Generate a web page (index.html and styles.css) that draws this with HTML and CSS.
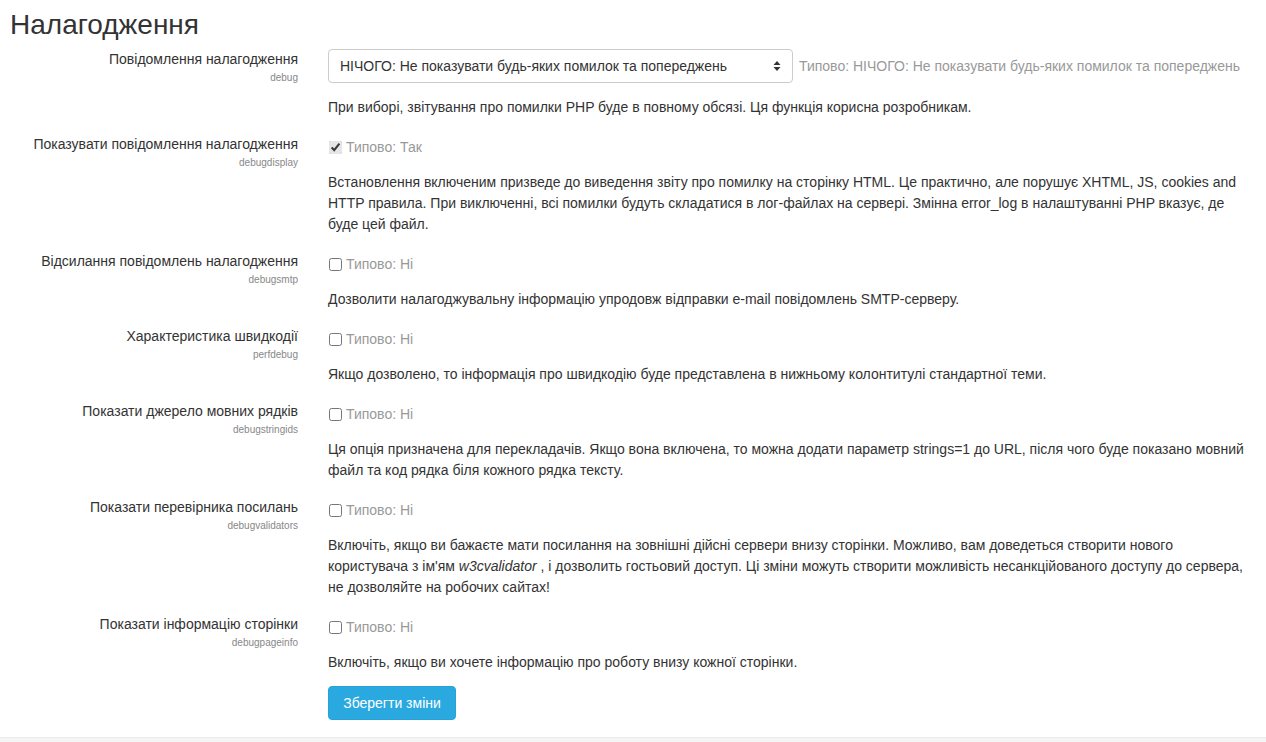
FILE: index.html
```html
<!DOCTYPE html>
<html lang="uk">
<head>
<meta charset="utf-8">
<title>Налагодження</title>
<link rel="stylesheet" href="styles.css">
</head>
<body>
<div class="page">
  <h2 class="title">Налагодження</h2>

  <div class="row">
    <div class="label"><div class="name">Повідомлення налагодження</div><div class="short">debug</div></div>
    <div class="setting">
      <div class="ctl-line">
        <div class="select-wrap">
          <select class="select"><option>НІЧОГО: Не показувати будь-яких помилок та попереджень</option></select>
          <svg class="arrows" width="8" height="12" viewBox="0 0 8 12"><path d="M4 1 L7.5 5 H0.5 Z M4 11 L7.5 7 H0.5 Z" fill="#333"/></svg>
        </div>
        <span class="default sel-default">Типово: НІЧОГО: Не показувати будь-яких помилок та попереджень</span>
      </div>
      <div class="desc">При виборі, звітування про помилки PHP буде в повному обсязі. Ця функція корисна розробникам.</div>
    </div>
  </div>

  <div class="row">
    <div class="label"><div class="name">Показувати повідомлення налагодження</div><div class="short">debugdisplay</div></div>
    <div class="setting">
      <div class="check-line"><input type="checkbox" checked><span class="default">Типово: Так</span></div>
      <div class="desc">Встановлення включеним призведе до виведення звіту про помилку на сторінку HTML. Це практично, але порушує XHTML, JS, cookies and HTTP правила. При виключенні, всі помилки будуть складатися в лог-файлах на сервері. Змінна error_log в налаштуванні PHP вказує, де буде цей файл.</div>
    </div>
  </div>

  <div class="row">
    <div class="label"><div class="name">Відсилання повідомлень налагодження</div><div class="short">debugsmtp</div></div>
    <div class="setting">
      <div class="check-line"><input type="checkbox"><span class="default">Типово: Ні</span></div>
      <div class="desc">Дозволити налагоджувальну інформацію упродовж відправки e-mail повідомлень SMTP-серверу.</div>
    </div>
  </div>

  <div class="row">
    <div class="label"><div class="name">Характеристика швидкодії</div><div class="short">perfdebug</div></div>
    <div class="setting">
      <div class="check-line"><input type="checkbox"><span class="default">Типово: Ні</span></div>
      <div class="desc">Якщо дозволено, то інформація про швидкодію буде представлена в нижньому колонтитулі стандартної теми.</div>
    </div>
  </div>

  <div class="row">
    <div class="label"><div class="name">Показати джерело мовних рядків</div><div class="short">debugstringids</div></div>
    <div class="setting">
      <div class="check-line"><input type="checkbox"><span class="default">Типово: Ні</span></div>
      <div class="desc">Ця опція призначена для перекладачів. Якщо вона включена, то можна додати параметр strings=1 до URL, після чого буде показано мовний файл та код рядка біля кожного рядка тексту.</div>
    </div>
  </div>

  <div class="row">
    <div class="label"><div class="name">Показати перевірника посилань</div><div class="short">debugvalidators</div></div>
    <div class="setting">
      <div class="check-line"><input type="checkbox"><span class="default">Типово: Ні</span></div>
      <div class="desc">Включіть, якщо ви бажаєте мати посилання на зовнішні дійсні сервери внизу сторінки. Можливо, вам доведеться створити нового користувача з ім'ям <em>w3cvalidator</em> , і дозволить гостьовий доступ. Ці зміни можуть створити можливість несанкційованого доступу до сервера, не дозволяйте на робочих сайтах!</div>
    </div>
  </div>

  <div class="row">
    <div class="label"><div class="name">Показати інформацію сторінки</div><div class="short">debugpageinfo</div></div>
    <div class="setting">
      <div class="check-line"><input type="checkbox"><span class="default">Типово: Ні</span></div>
      <div class="desc">Включіть, якщо ви хочете інформацію про роботу внизу кожної сторінки.</div>
    </div>
  </div>

  <div class="actions">
    <button class="btn">Зберегти зміни</button>
  </div>
</div>
<div class="footer"></div>
</body>
</html>
```

FILE: styles.css
```css
html, body {
  margin: 0;
  padding: 0;
  background: #fff;
}
body {
  font-family: "Liberation Sans", Arial, sans-serif;
  font-size: 14px;
  line-height: 21px;
  color: #333;
}
.page {
  padding: 0 10px 0 10px;
  height: 737px;
  box-sizing: border-box;
  overflow: hidden;
}
.title {
  margin: 7px 0 0 0;
  font-size: 28px;
  line-height: 36px;
  font-weight: normal;
  color: #333;
}
.row {
  display: flex;
  margin-top: 5.5px;
  margin-bottom: 16px;
}
.row + .row {
  margin-top: 0;
}
.label {
  width: 288px;
  flex: none;
  text-align: right;
}
.name {
  line-height: 21px;
}
.short {
  font-size: 10px;
  line-height: 16px;
  color: #888;
}
.setting {
  flex: 1;
  margin-left: 30px;
  padding-right: 12px;
}
.ctl-line {
  display: flex;
  align-items: center;
  margin-top: 0.5px;
}
.select-wrap {
  position: relative;
  width: 465px;
  height: 34px;
}
.select {
  appearance: none;
  -webkit-appearance: none;
  width: 100%;
  height: 34px;
  box-sizing: border-box;
  border: 1px solid #ccc;
  border-radius: 4px;
  background: #fff;
  padding: 0 30px 0 11px;
  font-family: "Liberation Sans", Arial, sans-serif;
  font-size: 14px;
  color: #333;
}
.arrows {
  position: absolute;
  right: 12px;
  top: 11px;
  pointer-events: none;
}
.sel-default {
  margin-left: 6px;
}
.default {
  color: #999;
}
.check-line {
  display: flex;
  align-items: center;
  margin-top: 2.5px;
  height: 21px;
}
.check-line input {
  margin: 0 4px 0 1px;
  width: 13px;
  height: 13px;
  accent-color: #e6e6e6;
}
.desc {
  margin-top: 14.5px;
}
.ctl-line + .desc {
  margin-top: 14px;
}
.desc em {
  font-style: italic;
}
.actions {
  margin-left: 318px;
  margin-top: -3.5px;
}
.btn {
  background: #29a9df;
  border: 1px solid #26a2d8;
  color: #fff;
  border-radius: 4px;
  height: 34px;
  width: 128px;
  font-family: "Liberation Sans", Arial, sans-serif;
  font-size: 14px;
  padding: 0;
}
.footer {
  height: 5px;
  background: #f5f5f5;
  border-top: 1px solid #ececec;
}
```
